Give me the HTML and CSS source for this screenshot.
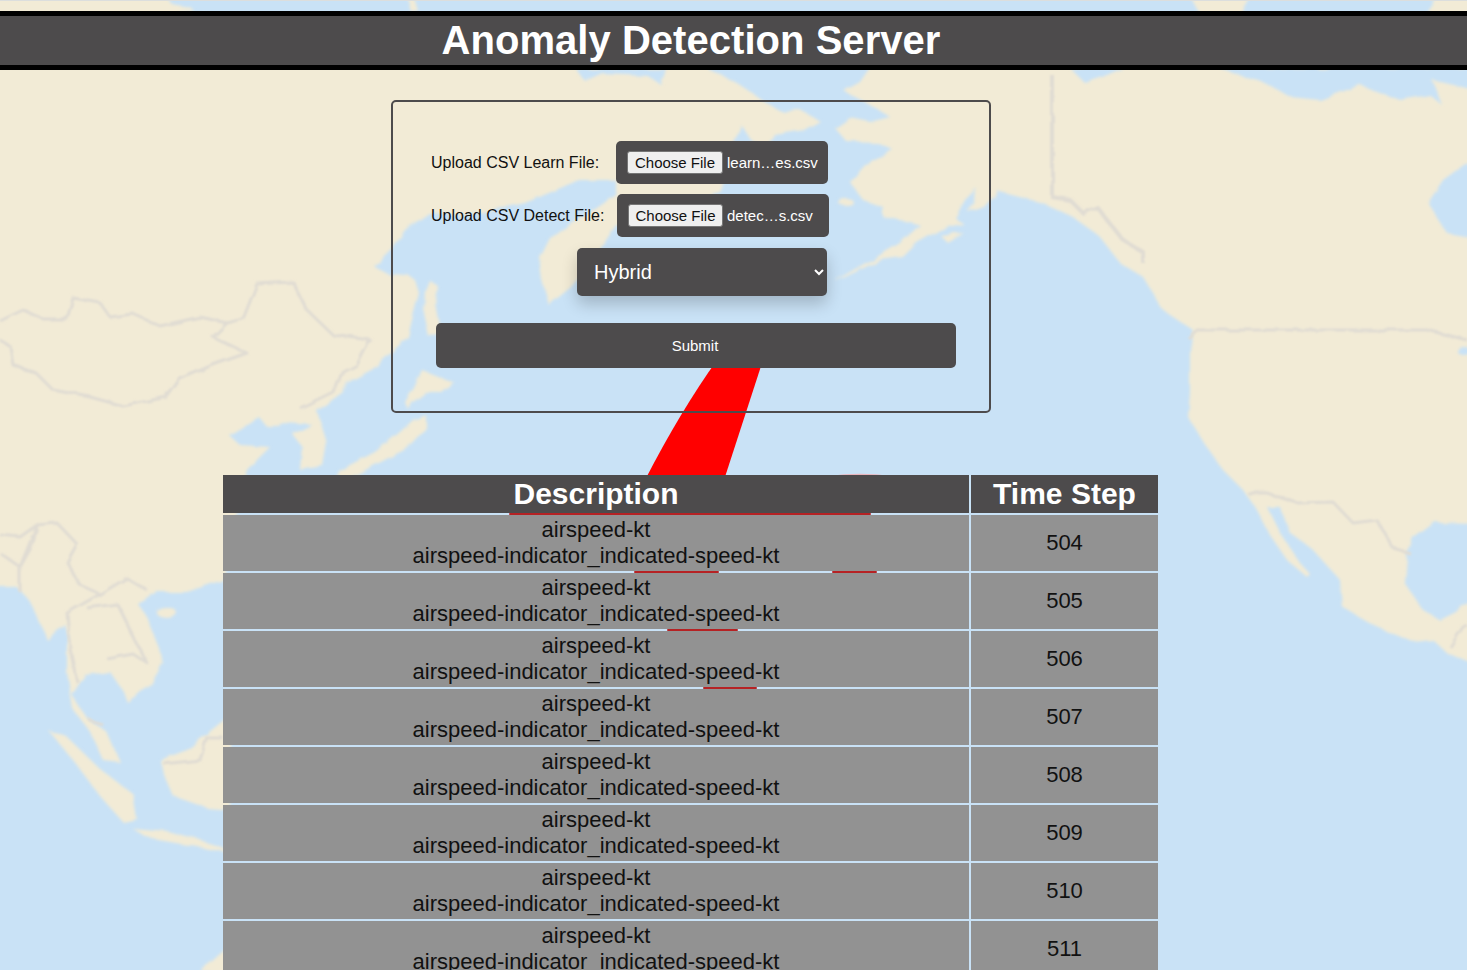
FILE: index.html
```html
<!DOCTYPE html>
<html>
	<head>
		<meta charset="utf-8" />
		<title>Anomaly Detection Server</title>
		<link rel="stylesheet" href="styles.css">
	</head>
	<body>
		<!-- map behind everything -->
		<svg class="map" viewBox="0 0 1467 970" width="1467" height="970">
			<defs>
				<filter id="soft" x="-2%" y="-2%" width="104%" height="104%">
					<feTurbulence type="fractalNoise" baseFrequency="0.06" numOctaves="2" seed="4" result="n" />
					<feDisplacementMap in="SourceGraphic" in2="n" scale="6" result="d" />
					<feGaussianBlur in="d" stdDeviation="1.4" />
				</filter>
				<filter id="softer" x="-2%" y="-2%" width="104%" height="104%">
					<feTurbulence type="fractalNoise" baseFrequency="0.07" numOctaves="2" seed="9" result="n" />
					<feDisplacementMap in="SourceGraphic" in2="n" scale="5" result="d" />
					<feGaussianBlur in="d" stdDeviation="1.1" />
				</filter>
			</defs>
			<rect width="1467" height="970" fill="#c9e2f6" />
			<g filter="url(#soft)" fill="#f2ebd6">
				<!-- asia -->
				<polygon points="-9,-9 165,-9 175,11 700,60 710,70 735,82 759,98 775,108 782,111 800,110 820,121 804,130 775,135 768,148 752,141 741,125 735,141 720,190 660,225 616,225 590,265 570,288 549,305 542,280 539,257 549,237 582,218 616,195 616,180 579,180 549,193 525,203 470,215 429,213 405,230 392,250 380,262 373,265 392,277 405,272 415,280 419,293 412,320 408,337 393,351 373,369 347,383 343,392 317,411 327,443 323,466 300,470 302,447 293,434 313,424 283,422 267,427 260,418 230,436 240,445 270,447 247,470 243,480 223,580 187,592 157,592 137,603 147,617 160,649 163,663 150,686 127,702 123,691 110,672 85,675 72,695 87,718 107,732 120,762 103,760 90,732 73,709 67,672 67,626 47,640 42,626 28,599 17,587 -9,587" />
				<polygon points="429,280 439,287 435,303 440,330 429,337 424,313 425,290" />
				<polygon points="422,370 435,375 455,383 442,393 425,393 412,403 409,410 405,402 414,388" />
				<polygon points="413,420 427,415 427,429 410,447 373,466 350,478 330,490 340,470 375,452 400,432" />
				<ellipse cx="167" cy="613" rx="10" ry="5" />
				<polygon points="48,730 67,737 100,769 133,794 137,819 123,822 100,796 73,760" />
				<polygon points="132,828 167,831 200,840 230,850 230,853 187,845 147,838" />
				<polygon points="160,760 187,750 230,715 230,810 207,808 173,796 163,773" />
				<polygon points="230,945 200,972 230,975" />
				<!-- north america -->
				<polygon points="875,60 860,82 844,91 855,97 867,103 890,117 870,122 850,118 835,128 847,142 877,143 893,150 867,163 850,182 863,200 883,207 883,217 910,222 920,225 900,243 880,255 857,268 833,282 845,277 880,260 903,257 917,243 940,230 963,223 955,218 965,200 977,188 968,212 990,203 1000,192 1043,203 1073,217 1100,237 1120,263 1143,277 1163,310 1193,330 1190,350 1190,393 1188,417 1207,447 1223,470 1243,490 1257,510 1270,535 1287,560 1307,577 1310,574 1300,563 1280,533 1267,507 1280,507 1290,533 1313,550 1340,580 1342,607 1377,627 1413,642 1433,640 1447,653 1475,665 1475,60" />
				<polygon points="940,235 963,232 947,242" />
				<ellipse cx="846" cy="202" rx="8" ry="3" />
				<polygon points="1188,-9 1253,-9 1240,14 1200,14" />
				<polygon points="1425,14 1440,-9 1475,-9 1475,14" />
				<polygon points="157,11 170,4 190,7 194,11" />
				<polygon points="405,-9 412,-9 418,11 410,11" />
			</g>
			<g filter="url(#soft)" fill="#c9e2f6">
				<!-- water cut out of the land -->
				<polygon points="576,69 666,69 661,85 648,76 600,74 585,81" />
				<polygon points="1070,68 1123,68 1100,78 1085,83" />
				<polygon points="1220,68 1270,85 1290,97 1320,100 1360,85 1400,100 1430,95 1442,105 1432,80 1475,90 1475,68" />
				<polygon points="1475,157 1443,180 1428,203 1447,233 1475,238" />
				<polygon points="1475,523 1433,522 1413,537 1407,557 1405,583 1423,610 1440,620 1460,610 1475,597" />
				<ellipse cx="1464" cy="351" rx="7" ry="4" />
			</g>
			<g filter="url(#softer)" fill="none" stroke="#e0dcd3" stroke-width="3" stroke-linejoin="round">
				<!-- borders -->
				<polyline points="0,321 23,310 43,319 67,319 73,298 100,303 110,317 133,314 160,326 200,317 227,323 243,319 257,284 293,282 307,310 333,335 370,340 357,365 340,374 333,392 300,408" />
				<polyline points="227,323 213,337 247,353 213,365 180,379 167,397 123,406 90,397 53,390 37,374 13,365 10,346 0,340" />
				<polyline points="0,535 20,537 37,525 57,523 77,544 67,562 80,585 100,594 127,578 147,590" />
				<polyline points="0,553 20,567 33,544 37,525 20,567 20,592" />
				<polyline points="100,594 67,613 70,649 77,682" />
				<polyline points="87,608 117,604 133,636 147,663 133,654 107,659" />
				<polyline points="163,764 200,760 207,737 223,737" />
				<polyline points="87,718 103,725" />
				<polyline points="1052,75 1052,197 1070,200 1083,213 1097,207 1123,240 1143,252 1143,263" stroke-width="4" />
				<polyline points="1188,338 1197,330 1427,330 1467,340" />
				<polyline points="1247,493 1267,493 1297,503 1333,502 1353,523 1377,520 1393,548 1410,553" />
				<polyline points="1450,647 1463,627 1467,625" />
			</g>
			<rect width="1467" height="1" fill="#dcdedd" />
			<path d="M717 360 L763 360 L724 480 L645 480 Q680 412 717 360 Z" fill="#ff0000" />
			<rect x="509" y="513" width="362" height="2" rx="1" fill="#b52224" />
			<rect x="634" y="571" width="85" height="2" rx="1" fill="#b52224" />
			<rect x="832" y="571" width="45" height="2" rx="1" fill="#b52224" />
			<rect x="667" y="629" width="71" height="2" rx="1" fill="#b52224" />
			<rect x="703" y="687" width="54" height="2" rx="1" fill="#b52224" />
			<ellipse cx="860" cy="475" rx="22" ry="1.2" fill="#e9b4bc" />
		</svg>

		<header class="top">
			<h1>Anomaly Detection Server</h1>
		</header>

		<div class="content">
			<form class="upload">
				<div class="row">
					<label class="lbl">Upload CSV Learn File:</label>
					<div class="file">
						<button type="button" class="pick">Choose File</button>
						<span class="fname">learn…es.csv</span>
					</div>
				</div>
				<div class="row row2">
					<label class="lbl">Upload CSV Detect File:</label>
					<div class="file">
						<button type="button" class="pick">Choose File</button>
						<span class="fname">detec…s.csv</span>
					</div>
				</div>
				<select class="algo">
					<option>Hybrid</option>
					<option>Regression</option>
				</select>
				<button type="button" class="send">Submit</button>
			</form>

			<table class="results">
				<thead>
					<tr><th class="desc">Description</th><th class="step">Time Step</th></tr>
				</thead>
				<tbody>
					<tr><td>airspeed-kt<br>airspeed-indicator_indicated-speed-kt</td><td>504</td></tr>
					<tr><td>airspeed-kt<br>airspeed-indicator_indicated-speed-kt</td><td>505</td></tr>
					<tr><td>airspeed-kt<br>airspeed-indicator_indicated-speed-kt</td><td>506</td></tr>
					<tr><td>airspeed-kt<br>airspeed-indicator_indicated-speed-kt</td><td>507</td></tr>
					<tr><td>airspeed-kt<br>airspeed-indicator_indicated-speed-kt</td><td>508</td></tr>
					<tr><td>airspeed-kt<br>airspeed-indicator_indicated-speed-kt</td><td>509</td></tr>
					<tr><td>airspeed-kt<br>airspeed-indicator_indicated-speed-kt</td><td>510</td></tr>
					<tr><td>airspeed-kt<br>airspeed-indicator_indicated-speed-kt</td><td>511</td></tr>
				</tbody>
			</table>
		</div>
	</body>
</html>
```

FILE: styles.css
```css
html{height: 100%;overflow: hidden;}
body{margin: 0;padding-top: 11px;height: 959px;overflow: hidden;position: relative;font-family: "Liberation Sans",Arial,sans-serif;color: #111;}

.map{position: absolute;left: 0;top: 0;z-index: -1;}

.top{background: #4d4b4c;border-top: 5px solid #000;border-bottom: 5px solid #000;height: 49px;}
.top h1{margin: 0;padding-right: 85px;text-align: center;color: #fff;font-size: 40px;font-weight: bold;line-height: 49px;letter-spacing: .04px;}

.content{width: 1382px;}

.upload{box-sizing: border-box;width: 600px;height: 313px;margin: 30px auto 0;padding: 39px 38px 0;border: 2px solid #4d4b4c;border-radius: 5px;}
.row{display: flex;align-items: center;margin-bottom: 10px;}
.lbl{width: 185px;font-size: 16px;color: #111;}
.row2 .lbl{width: 186px;}
.file{box-sizing: border-box;display: flex;align-items: center;gap: 4px;flex: none;width: 212px;height: 43px;padding-left: 11px;background: #4d4b4c;border-radius: 5px;}
.pick{box-sizing: border-box;width: 96px;height: 23px;padding: 0;background: #efefef;border: 1px solid #767676;border-radius: 3px;font-family: inherit;font-size: 15px;color: #111;}
.row2 .pick{width: 95px;}
.fname{font-size: 15px;color: #fff;white-space: nowrap;}

.algo{display: block;box-sizing: border-box;width: 250px;height: 48px;margin: 11px 0 0 146px;padding: 0 13px;background: #4d4b4c;color: #fff;border: 0;border-radius: 5px;font-family: inherit;font-size: 20px;box-shadow: 0 8px 16px rgba(0,0,0,.2);}
.send{display: block;width: 520px;height: 45px;margin: 27px 0 0 5px;padding: 0 2px 0 0;background: #4d4b4c;color: #fff;border: 0;border-radius: 5px;font-family: inherit;font-size: 15px;}

.results{table-layout: fixed;width: 939px;margin: 60px 0 0 221px;border-spacing: 2px;text-align: center;}
.results th{height: 38px;padding: 0;background: #4d4b4c;color: #fff;font-size: 30px;font-weight: bold;line-height: 38px;}
.results .desc{width: 746px;}
.results .step{width: 187px;}
.results td{height: 56px;padding: 2px 0;box-sizing: border-box;background: #929292;color: #111;font-size: 22px;line-height: 26px;}
```
